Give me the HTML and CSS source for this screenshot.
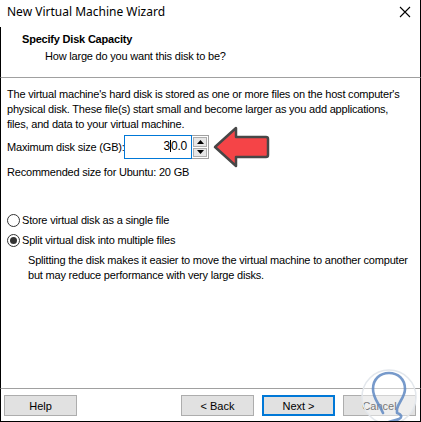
FILE: index.html
```html
<!DOCTYPE html>
<html lang="en">
<head>
    <meta charset="UTF-8">
    <title>New Virtual Machine Wizard</title>
    <link rel="stylesheet" href="styles.css">
</head>
<body>
    <div class="window">
        <div class="titlebar">
            <span class="title">New Virtual Machine Wizard</span>
            <svg class="close" width="12" height="12" viewBox="0 0 12 12">
                <path d="M1 1 L11 11 M11 1 L1 11" stroke="#000" stroke-width="1.1" fill="none"/>
            </svg>
        </div>

        <div class="header">
            <h2>Specify Disk Capacity</h2>
            <p>How large do you want this disk to be?</p>
        </div>

        <div class="content">
            <p class="intro">The virtual machine's hard disk is stored as one or more files on the host computer's physical disk. These file(s) start small and become larger as you add applications, files, and data to your virtual machine.</p>

            <div class="size-row">
                <label>Maximum disk size (GB):</label>
                <div class="spin">
                    <div class="spin-input">3<span class="caret"></span>0.0</div>
                    <div class="spin-btns">
                        <span class="spin-btn">
                            <svg width="7" height="4" viewBox="0 0 7 4"><path d="M3.5 0 L7 4 L0 4 Z" fill="#000"/></svg>
                        </span>
                        <span class="spin-btn">
                            <svg width="7" height="4" viewBox="0 0 7 4"><path d="M0 0 L7 0 L3.5 4 Z" fill="#000"/></svg>
                        </span>
                    </div>
                </div>
                <svg class="arrow" width="58" height="44" viewBox="0 0 58 44">
                    <path d="M3 22 L24 3 L24 12 L54 12 Q56 12 56 14 L56 30 Q56 32 54 32 L24 32 L24 41 Z"
                          fill="#f54447" stroke="#474747" stroke-width="2.5" stroke-linejoin="round"/>
                </svg>
            </div>

            <p class="recommended">Recommended size for Ubuntu: 20 GB</p>

            <div class="options">
                <div class="radio-row">
                    <span class="radio"></span>
                    <span>Store virtual disk as a single file</span>
                </div>
                <div class="radio-row">
                    <span class="radio checked"></span>
                    <span>Split virtual disk into multiple files</span>
                </div>
                <p class="note">Splitting the disk makes it easier to move the virtual machine to another computer but may reduce performance with very large disks.</p>
            </div>
        </div>

        <div class="footer">
            <button class="btn">Help</button>
            <div class="nav">
                <button class="btn">&lt; Back</button>
                <button class="btn default">Next &gt;</button>
                <button class="btn">Cancel</button>
            </div>
        </div>

        <svg class="watermark" width="56" height="80" viewBox="0 0 56 80">
            <circle cx="28" cy="34" r="27" fill="rgba(255,255,255,0.45)" stroke="#e3e7ec" stroke-width="1.5"/>
            <path d="M22 50 C18 40 12 36 12 26 C12 16 19 10 28 10 C37 10 44 16 44 26 C44 34 38 38 36 46 L36 50 C40 51 42 54 38 56 C34 58 28 58 26 60 C30 60 34 61 32 63"
                  fill="none" stroke="#5f88c2" stroke-width="2.6" stroke-linecap="round" stroke-linejoin="round" opacity="0.85"/>
        </svg>
    </div>
</body>
</html>
```

FILE: styles.css
```css
/* dialog window */
body {
    margin: 0;
    background-color: #fff;
    font-family: "Liberation Sans", Arial, sans-serif;
    font-size: 11px;
    letter-spacing: -0.2px;
    color: #000;
}
.window {
    position: relative;
    width: 421px;
    height: 422px;
    box-sizing: border-box;
    display: flex;
    flex-direction: column;
    background-color: #fff;
    border-bottom: 1px solid #000;
    overflow: hidden;
}
.titlebar {
    height: 27px;
    flex: none;
    display: flex;
    align-items: center;
    justify-content: space-between;
    padding: 0 9px 4px 7px;
    box-sizing: border-box;
    border-right: 1px solid #000;
}
.title {
    font-family: "Noto Sans", sans-serif;
    font-size: 12px;
    letter-spacing: 0;
}
.close {
    display: block;
}

.header {
    flex: none;
    height: 51px;
    box-sizing: border-box;
    padding: 4px 0 0 21px;
    border-bottom: 1px solid #a0a0a0;
    border-left: 1px solid #000;
    border-right: 1px solid #000;
}
.header h2 {
    margin: 0;
    font-size: 11px;
    font-weight: bold;
    line-height: 16px;
}
.header p {
    margin: 1px 0 0 23px;
    line-height: 16px;
}

.content {
    flex: 1;
    padding: 9px 10px 0 6px;
    border-left: 1px solid #000;
    border-right: 1px solid #000;
}
.intro {
    margin: 0;
    line-height: 15px;
}
.size-row {
    display: flex;
    align-items: center;
    margin-top: 3px;
    height: 24px;
}
.size-row label {
    width: 117px;
    white-space: nowrap;
}
.spin {
    display: flex;
    height: 24px;
}
.spin-input {
    width: 68px;
    height: 24px;
    box-sizing: border-box;
    border: 1px solid #0078d7;
    padding-right: 4px;
    text-align: right;
    line-height: 21px;
    font-size: 12px;
}
.caret {
    display: inline-block;
    width: 1px;
    height: 12px;
    background-color: #000;
    vertical-align: -2px;
}
.spin-btns {
    display: flex;
    flex-direction: column;
    width: 17px;
    border: 1px solid #a0a0a0;
    border-left: none;
    box-sizing: border-box;
    padding: 1px;
    gap: 1px;
}
.spin-btn {
    flex: 1;
    display: flex;
    align-items: center;
    justify-content: center;
    background-color: #e6e6e6;
    border: 1px solid #adadad;
}
.spin-btn svg {
    display: block;
}
.arrow {
    margin-left: 3px;
}
.recommended {
    margin: 7px 0 0 0;
}

.options {
    margin-top: 32px;
}
.radio-row {
    display: flex;
    align-items: center;
    gap: 2px;
    height: 20px;
}
.radio {
    width: 13px;
    height: 13px;
    box-sizing: border-box;
    border: 1px solid #333;
    border-radius: 50%;
    display: flex;
    align-items: center;
    justify-content: center;
}
.radio.checked::after {
    content: "";
    width: 7px;
    height: 7px;
    border-radius: 50%;
    background-color: #333;
}
.note {
    margin: 3px 0 0 21px;
    line-height: 15px;
}

.footer {
    flex: none;
    height: 33px;
    box-sizing: border-box;
    border-top: 1px solid #a0a0a0;
    border-left: 1px solid #000;
    border-right: 1px solid #000;
    display: flex;
    justify-content: space-between;
    padding: 6px 4px 0 3px;
}
.nav {
    display: flex;
    gap: 8px;
}
.btn {
    width: 73px;
    height: 21px;
    box-sizing: border-box;
    background-color: #e1e1e1;
    border: 1px solid #adadad;
    font-family: "Liberation Sans", Arial, sans-serif;
    font-size: 11px;
    color: #000;
    padding: 0;
}
.btn.default {
    border: 2px solid #0078d7;
}
.watermark {
    position: absolute;
    right: 4px;
    bottom: -22px;
}
```
